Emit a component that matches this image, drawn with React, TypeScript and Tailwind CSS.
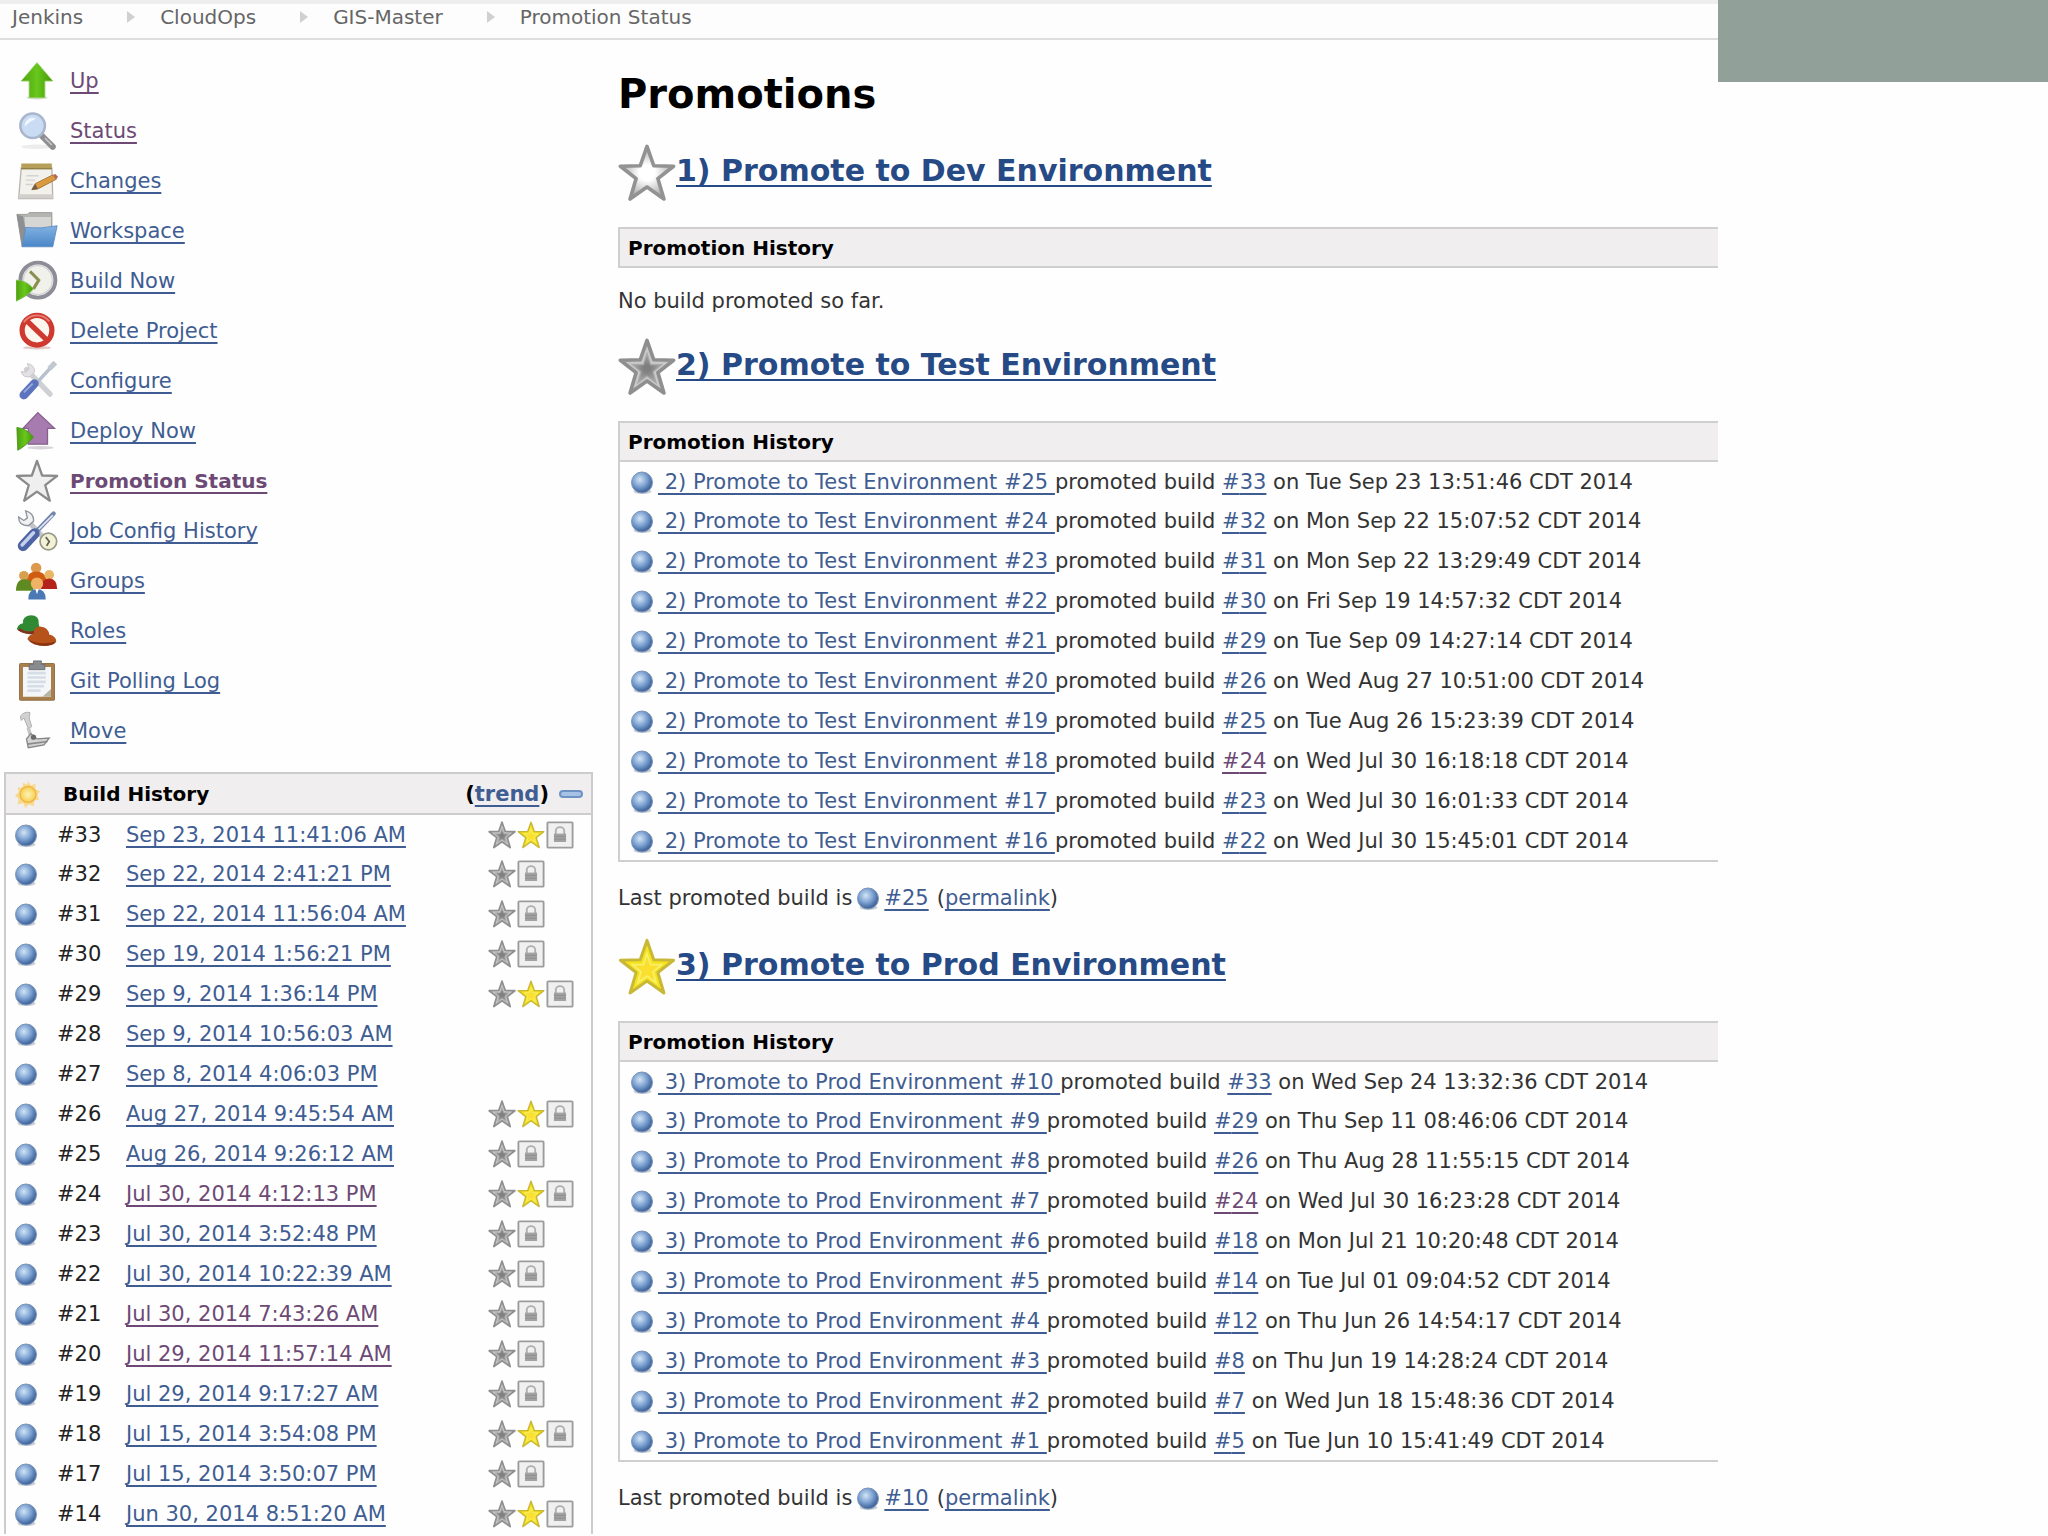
import React from "react";

const LINK = "text-[#3f5d92] underline decoration-2 underline-offset-4 [text-decoration-skip-ink:none]";
const VISITED = "text-[#6d4a75] underline decoration-2 underline-offset-4 [text-decoration-skip-ink:none]";

const STAR = "M24 2 L29.6 18 L46 18.4 L33 28.6 L38 45.500 L24 35.600 L10 45.500 L15 28.600 L2 18.400 L18.400 18 Z";
const INNER_STAR = "M24 13 L27 22 L36 22 L29 28 L31.500 37 L24 31.500 L16.500 37 L19 28 L12 22 L21 22 Z";

function Defs() {
  return (
    <svg className="absolute size-0" aria-hidden="true">
      <defs>
        <radialGradient id="ball" cx="0.4" cy="0.36" r="0.66">
          <stop offset="0" stopColor="#d3e4f5" />
          <stop offset="0.5" stopColor="#7fa4d3" />
          <stop offset="0.9" stopColor="#41679f" />
          <stop offset="1" stopColor="#55759f" />
        </radialGradient>
        <linearGradient id="green" x1="0" y1="0" x2="1" y2="0">
          <stop offset="0" stopColor="#4f9f10" />
          <stop offset="0.5" stopColor="#68c81c" />
          <stop offset="1" stopColor="#43960a" />
        </linearGradient>
        <linearGradient id="blue" x1="0" y1="0" x2="0" y2="1">
          <stop offset="0" stopColor="#82b2e2" />
          <stop offset="1" stopColor="#4a86c8" />
        </linearGradient>
        <radialGradient id="whiteStar">
          <stop offset="0.3" stopColor="#ffffff" />
          <stop offset="1" stopColor="#a8a8a8" />
        </radialGradient>
        <radialGradient id="silverCore">
          <stop offset="0.2" stopColor="#7f7f7f" />
          <stop offset="1" stopColor="#a6a6a6" />
        </radialGradient>
        <radialGradient id="sun">
          <stop offset="0" stopColor="#fdf3b8" />
          <stop offset="1" stopColor="#f6cf4e" />
        </radialGradient>
      </defs>
    </svg>
  );
}

function Ball() {
  return (
    <svg viewBox="0 0 24 24" className="size-6 shrink-0" role="img" aria-label="Success">
      <ellipse cx="12.500" cy="21.500" rx="9" ry="2.500" fill="#c9ced6" />
      <circle cx="12" cy="12.500" r="10.500" fill="url(#ball)" stroke="#7c93b5" strokeWidth="1" />
    </svg>
  );
}

type StarKind = "white" | "silver" | "gold" | "outline";

function Star({ kind, className }: { kind: StarKind; className: string }) {
  return (
    <svg viewBox="0 0 48 48" className={className} aria-hidden="true">
      {kind === "white" && <path d={STAR} fill="url(#whiteStar)" stroke="#929292" strokeWidth="3" strokeLinejoin="round" />}
      {kind === "outline" && <path d={STAR} fill="#efefef" stroke="#8a8a8a" strokeWidth="2.500" strokeLinejoin="round" />}
      {kind === "silver" && (
        <>
          <path d={STAR} fill="#c8c8c8" stroke="#8f8f8f" strokeWidth="3" strokeLinejoin="round" />
          <path d={INNER_STAR} fill="url(#silverCore)" stroke="#a8a8a8" strokeWidth="1" />
        </>
      )}
      {kind === "gold" && (
        <>
          <path d={STAR} fill="#f5e41c" stroke="#c9b838" strokeWidth="2.500" strokeLinejoin="round" />
          <path d={INNER_STAR} fill="#fbdf2e" stroke="#f8ef6a" strokeWidth="1.500" />
        </>
      )}
    </svg>
  );
}

function Lock() {
  return (
    <svg viewBox="0 0 30 30" className="size-7" role="img" aria-label="Keep this build">
      <rect x="1.500" y="1.500" width="27" height="27" rx="1" fill="#f0f0f0" stroke="#9c9c9c" strokeWidth="2" />
      <path d="M10.500 14 V10.500 a4.500 4 0 0 1 9 0 V14" fill="none" stroke="#b0b0b0" strokeWidth="2" />
      <rect x="8.500" y="13.500" width="13" height="9" fill="#a2a2a2" />
      <path d="M9 16.500h12M9 19.500h12" stroke="#8d8d8d" />
    </svg>
  );
}

const ICONS: Record<string, React.ReactNode> = {
  up: (
    <>
      <ellipse cx="24" cy="43" rx="12" ry="2" fill="#d5ddcf" />
      <path d="M24 3 L42 24 H33 V43 H15 V24 H6 Z" fill="url(#green)" stroke="#8fce5c" />
    </>
  ),
  status: (
    <>
      <ellipse cx="24" cy="42" rx="18" ry="2.500" fill="#ececec" />
      <path d="M29 29 L42 42" stroke="#8f8f92" strokeWidth="7" strokeLinecap="round" />
      <path d="M33 32 L41 40" stroke="#c4c4c8" strokeWidth="2" />
      <circle cx="19" cy="18" r="14" fill="#c9dcf4" stroke="#a9b6cc" strokeWidth="3" />
      <path d="M10 19 a9 9 0 0 1 13 -9 c-5 2 -9 5 -13 9Z" fill="#eff6ff" />
    </>
  ),
  changes: (
    <>
      <path d="M6 9 H41 L42 44 H3 Z" fill="#f3f1ec" stroke="#b7b3ac" strokeWidth="1.500" />
      <path d="M3 39 H42 V44 H3Z" fill="#d2d0cc" />
      <path d="M6 4 H41 V10 H6Z" fill="#b69f58" />
      <path d="M6 10 H41" stroke="#8f7c44" strokeWidth="1.500" />
      <path d="M12 18h14M11 23h11M11 28h8" stroke="#d3d3d3" strokeWidth="1.500" />
      <path d="M18 34 L22 27 L42 17 L46 22 L25 33 Z" fill="#dc9a3f" stroke="#a0713a" />
      <path d="M18 34 L22 27 L25 33Z" fill="#6f5c4a" />
      <path d="M42 17 L46 22 L48 19 L45 16Z" fill="#b5685a" />
    </>
  ),
  workspace: (
    <>
      <path d="M1 5 H13 L15 3 H41 V26 H9 L7 42 Z" fill="#b4b4b2" stroke="#92928f" />
      <path d="M10 8 H40 V22 H10Z" fill="#d6d6d4" />
      <path d="M1 5 L7 42 L11 22 L8 7Z" fill="#8d8f91" />
      <path d="M11 20 Q28 22 47 18 L42 42 H7 Z" fill="url(#blue)" stroke="#5a8cc4" />
    </>
  ),
  build: (
    <>
      <circle cx="25" cy="23" r="20" fill="#f1f1ec" stroke="#8d8d98" strokeWidth="4.500" />
      <circle cx="25" cy="23" r="16.500" fill="none" stroke="#d4d4d6" strokeWidth="1.500" />
      <path d="M16 13 L26 23 L20 33" fill="none" stroke="#8b8f4f" strokeWidth="3.500" />
      <path d="M0 23 Q12 23 20 33 Q12 42 0 47 Z" fill="url(#green)" stroke="#7cc04c" />
    </>
  ),
  delete: (
    <>
      <ellipse cx="24" cy="43" rx="16" ry="2" fill="#e3c9c6" />
      <circle cx="24" cy="23" r="17" fill="#fdf6ee" stroke="#cf3a30" strokeWidth="6" />
      <path d="M12 12 L36 35" stroke="#cf3a30" strokeWidth="6" />
      <path d="M9 14 A18 18 0 0 1 38 13" fill="none" stroke="#e98078" strokeWidth="2" />
    </>
  ),
  configure: (
    <>
      <path d="M12 11 L39 39" stroke="#cfd0d4" strokeWidth="6" strokeLinecap="round" />
      <path d="M6 13 q2 8 10 6 l5 -5 q1 -8 -8 -10 l2 6 -4 4Z" fill="#e3e1e4" stroke="#c6c2c6" />
      <path d="M43 5 L23 27" stroke="#b7c0cc" strokeWidth="4" strokeLinecap="round" />
      <path d="M45 3 L38 10" stroke="#c2c8d0" strokeWidth="6" />
      <path d="M21 27 L9 40" stroke="#5b74bd" strokeWidth="10" strokeLinecap="round" />
      <path d="M19 27 L9 37" stroke="#9cabdd" strokeWidth="2" />
    </>
  ),
  deploy: (
    <>
      <ellipse cx="28" cy="43" rx="15" ry="2" fill="#d9d4d9" />
      <path d="M25 3 L44 21 H36 V39 H14 V21 H8 Z" fill="#a87bb0" stroke="#85608d" strokeWidth="1.500" />
      <path d="M1 20 Q12 21 20 31 Q10 42 2 46 Z" fill="url(#green)" stroke="#4c9420" />
    </>
  ),
  history: (
    <>
      <path d="M13 12 L30 30" stroke="#c3c5cb" strokeWidth="6" />
      <path d="M3 8 q0 10 11 10 l6 -5 q1 -9 -9 -12 l2 8 -4 3Z" fill="#f1f1f1" stroke="#8f929b" strokeWidth="1.500" />
      <path d="M43 4 L23 25" stroke="#7486ad" strokeWidth="5" strokeLinecap="round" />
      <path d="M42 6 L26 22" stroke="#e2e8f4" strokeWidth="2" />
      <path d="M21 27 L8 41" stroke="#4d64a5" strokeWidth="12" strokeLinecap="round" />
      <path d="M20 26 L7 40" stroke="#c6d1ee" strokeWidth="4" strokeLinecap="round" />
      <circle cx="37" cy="36" r="9.500" fill="#f3f2d4" stroke="#9a9b8c" strokeWidth="2" />
      <path d="M34 31 L38 36 L35 41" fill="none" stroke="#5f6257" strokeWidth="2" />
    </>
  ),
  groups: (
    <>
      <circle cx="23" cy="9" r="6" fill="#dd9a4e" />
      <path d="M11 30 q0 -17 12 -17 q13 0 13 17Z" fill="#cf5c12" />
      <circle cx="9" cy="18" r="5.500" fill="#d7a04f" />
      <path d="M0 35 q0 -13 10 -13 q10 0 10 13Z" fill="#5f8a22" />
      <circle cx="38" cy="17" r="5.500" fill="#e8b765" />
      <path d="M28 33 q1 -12 10 -12 q9 0 9 12Z" fill="#b3231b" />
      <circle cx="24" cy="27" r="7" fill="#f0b264" />
      <path d="M14 45 q0 -12 10 -12 q10 0 10 12Z" fill="#4a79b5" />
      <path d="M22 33h4l-2 6Z" fill="#ffffff" />
    </>
  ),
  roles: (
    <>
      <path d="M1 22 q1 -6 7 -7 q-1 -8 9 -9 q10 0 9 10 l2 9 q-12 7 -27 -3Z" fill="#2f8a33" />
      <path d="M3 22 q9 6 20 3" fill="none" stroke="#85301f" strokeWidth="3" />
      <path d="M13 33 q2 -5 7 -6 q0 -9 9 -8 q8 1 9 9 q8 2 8 8 q-10 8 -25 3 Z" fill="#b5531a" />
      <path d="M13 33 q14 8 33 3 q-3 5 -12 5 q-16 0 -21 -8Z" fill="#8c3412" />
    </>
  ),
  clipboard: (
    <>
      <rect x="4" y="4" width="40" height="42" rx="1" fill="#a97f4b" stroke="#8a683f" />
      <rect x="8" y="8" width="32" height="34" fill="#f5f6f7" />
      <path d="M13 15h21M13 20h21M13 25h21M13 30h19M13 35h15" stroke="#d5dde7" strokeWidth="3" />
      <path d="M30 42 L40 33 V42Z" fill="#b9b4a8" />
      <path d="M15 11 V5 H20 V1 H29 V5 H33 V11Z" fill="#888b90" stroke="#6c6f73" />
    </>
  ),
  move: (
    <>
      <path d="M5 7 q5 -6 11 -4 l-1 6 3 10 -4 2 -5 -12 -3 3Z" fill="#d2d2d2" stroke="#a8a8a8" />
      <path d="M14 20 L17 31" stroke="#c4c4c4" strokeWidth="4" />
      <path d="M12 33 L17 27 L24 33 L38 32 L32 40 L14 43 Z" fill="#d4d4d4" stroke="#868686" strokeWidth="1.500" />
      <circle cx="20" cy="31" r="3" fill="#6b6b6b" />
      <path d="M13 39 L36 36" stroke="#8a8a8a" strokeWidth="2" />
    </>
  ),
};

function TaskIcon({ name }: { name: string }) {
  if (name === "star") return <Star kind="outline" className="size-11 shrink-0" />;
  return (
    <svg viewBox="0 0 48 48" className="size-[42px] shrink-0" aria-hidden="true">
      {ICONS[name]}
    </svg>
  );
}

const TASKS: { icon: string; label: string; visited?: boolean; bold?: boolean }[] = [
  { icon: "up", label: "Up", visited: true },
  { icon: "status", label: "Status", visited: true },
  { icon: "changes", label: "Changes" },
  { icon: "workspace", label: "Workspace" },
  { icon: "build", label: "Build Now" },
  { icon: "delete", label: "Delete Project" },
  { icon: "configure", label: "Configure" },
  { icon: "deploy", label: "Deploy Now" },
  { icon: "star", label: "Promotion Status", visited: true, bold: true },
  { icon: "history", label: "Job Config History" },
  { icon: "groups", label: "Groups" },
  { icon: "roles", label: "Roles" },
  { icon: "clipboard", label: "Git Polling Log" },
  { icon: "move", label: "Move" },
];

// badges: 0 = none, 1 = test promotion, 2 = test and prod promotions
const BUILDS: { id: number; date: string; badges: 0 | 1 | 2; visited?: boolean }[] = [
  { id: 33, date: "Sep 23, 2014 11:41:06 AM", badges: 2 },
  { id: 32, date: "Sep 22, 2014 2:41:21 PM", badges: 1 },
  { id: 31, date: "Sep 22, 2014 11:56:04 AM", badges: 1 },
  { id: 30, date: "Sep 19, 2014 1:56:21 PM", badges: 1 },
  { id: 29, date: "Sep 9, 2014 1:36:14 PM", badges: 2 },
  { id: 28, date: "Sep 9, 2014 10:56:03 AM", badges: 0 },
  { id: 27, date: "Sep 8, 2014 4:06:03 PM", badges: 0 },
  { id: 26, date: "Aug 27, 2014 9:45:54 AM", badges: 2 },
  { id: 25, date: "Aug 26, 2014 9:26:12 AM", badges: 1 },
  { id: 24, date: "Jul 30, 2014 4:12:13 PM", badges: 2, visited: true },
  { id: 23, date: "Jul 30, 2014 3:52:48 PM", badges: 1 },
  { id: 22, date: "Jul 30, 2014 10:22:39 AM", badges: 1 },
  { id: 21, date: "Jul 30, 2014 7:43:26 AM", badges: 1, visited: true },
  { id: 20, date: "Jul 29, 2014 11:57:14 AM", badges: 1, visited: true },
  { id: 19, date: "Jul 29, 2014 9:17:27 AM", badges: 1 },
  { id: 18, date: "Jul 15, 2014 3:54:08 PM", badges: 2 },
  { id: 17, date: "Jul 15, 2014 3:50:07 PM", badges: 1 },
  { id: 14, date: "Jun 30, 2014 8:51:20 AM", badges: 2 },
];

type Promotion = [run: number, build: number, when: string];

const TEST_RUNS: Promotion[] = [
  [25, 33, "Tue Sep 23 13:51:46 CDT 2014"],
  [24, 32, "Mon Sep 22 15:07:52 CDT 2014"],
  [23, 31, "Mon Sep 22 13:29:49 CDT 2014"],
  [22, 30, "Fri Sep 19 14:57:32 CDT 2014"],
  [21, 29, "Tue Sep 09 14:27:14 CDT 2014"],
  [20, 26, "Wed Aug 27 10:51:00 CDT 2014"],
  [19, 25, "Tue Aug 26 15:23:39 CDT 2014"],
  [18, 24, "Wed Jul 30 16:18:18 CDT 2014"],
  [17, 23, "Wed Jul 30 16:01:33 CDT 2014"],
  [16, 22, "Wed Jul 30 15:45:01 CDT 2014"],
];

const PROD_RUNS: Promotion[] = [
  [10, 33, "Wed Sep 24 13:32:36 CDT 2014"],
  [9, 29, "Thu Sep 11 08:46:06 CDT 2014"],
  [8, 26, "Thu Aug 28 11:55:15 CDT 2014"],
  [7, 24, "Wed Jul 30 16:23:28 CDT 2014"],
  [6, 18, "Mon Jul 21 10:20:48 CDT 2014"],
  [5, 14, "Tue Jul 01 09:04:52 CDT 2014"],
  [4, 12, "Thu Jun 26 14:54:17 CDT 2014"],
  [3, 8, "Thu Jun 19 14:28:24 CDT 2014"],
  [2, 7, "Wed Jun 18 15:48:36 CDT 2014"],
  [1, 5, "Tue Jun 10 15:41:49 CDT 2014"],
];

function Breadcrumbs() {
  const items = ["Jenkins", "CloudOps", "GIS-Master", "Promotion Status"];
  return (
    <nav aria-label="Breadcrumb" className="border-t-4 border-b-2 border-t-[#eeeeee] border-b-[#dedede] bg-[#fdfdfd]">
      <ol className="flex h-[34px] items-center pb-2 pl-3 text-[20px] leading-6 text-[#666666]">
        {items.map((item, i) => (
          <li key={item} className="flex items-center">
            {i > 0 && (
              <svg viewBox="0 0 8 12" className="mr-[25px] ml-11 h-3 w-2" aria-hidden="true">
                <path d="M0 0 L8 6 L0 12Z" fill="#d0d0d0" />
              </svg>
            )}
            <a href="#">{item}</a>
          </li>
        ))}
      </ol>
    </nav>
  );
}

function BuildHistory() {
  return (
    <table className="w-full border-2 border-b-0 border-[#cccccc]">
      <thead>
        <tr className="h-[41px] border-b-2 border-[#cccccc] bg-[#f0eeee] text-left text-[20px] text-black">
          <th className="w-12 pl-2">
            <svg viewBox="0 0 30 30" className="size-7" aria-hidden="true">
              <path
                d="M15 1l3 5 5-2v6l5 2-3 4 2 5-5 1-1 6-5-2-4 4-2-5-6 1 1-6-4-3 4-4-1-5 5 0 1-5 4 2z"
                fill="#f9d98c"
              />
              <circle cx="15" cy="15.500" r="8.500" fill="url(#sun)" stroke="#eeb64a" strokeWidth="1.500" />
            </svg>
          </th>
          <th colSpan={2} className="pl-[10px]">Build History</th>
          <th className="pr-2">
            <div className="flex items-center justify-end gap-[10px] text-[21px]">
              <span>
                (<a href="#" className={LINK}>trend</a>)
              </span>
              <button type="button" aria-label="Collapse build history" className="h-2 w-6 rounded-sm border-2 border-[#6f92c4] bg-[#a8c2e6]" />
            </div>
          </th>
        </tr>
      </thead>
      <tbody>
        {BUILDS.map((b) => (
          <tr key={b.id} className="h-10">
            <td className="pl-2"><Ball /></td>
            <td className="w-[73px] pl-1 text-[#222222]">#{b.id}</td>
            <td><a href="#" className={b.visited ? VISITED : LINK}>{b.date}</a></td>
            <td className="w-[170px] pl-[66px]">
              {b.badges > 0 && (
                <div className="flex items-center gap-px">
                  <Star kind="silver" className="size-7" />
                  {b.badges === 2 && <Star kind="gold" className="size-7" />}
                  <Lock />
                </div>
              )}
            </td>
          </tr>
        ))}
      </tbody>
    </table>
  );
}

function Process({ title, star, runs }: { title: string; star: StarKind; runs: Promotion[] }) {
  return (
    <section>
      <h2 className="flex h-[60px] items-center text-[30px] font-bold">
        <Star kind={star} className="size-[58px]" />
        <a href="#" className="pb-1 text-[#264a86] underline decoration-2 underline-offset-4 [text-decoration-skip-ink:none]">
          {title}
        </a>
      </h2>
      <table className="mt-6 w-full border-y-2 border-l-2 border-[#cfcfcf]">
        <thead>
          <tr className="h-[39px] bg-[#f0eeef] text-left text-[20px] text-black">
            <th className="pl-2">Promotion History</th>
          </tr>
        </thead>
        {runs.length > 0 && (
          <tbody className="border-t-2 border-[#cfcfcf]">
            {runs.map(([run, build, when]) => (
              <tr key={run} className="h-10">
                <td className="pl-[10px]">
                  <div className="flex items-center gap-1 whitespace-pre">
                    <Ball />
                    <p>
                      <a href="#" className={LINK}>{` ${title} #${run} `}</a>
                      promoted build{" "}
                      <a href="#" className={build === 24 ? VISITED : LINK}>#{build}</a>
                      {` on ${when}`}
                    </p>
                  </div>
                </td>
              </tr>
            ))}
          </tbody>
        )}
      </table>
      {runs.length > 0 ? (
        <p className="mt-[22px] mb-[25px] flex h-7 items-center">
          <span className="mr-1">Last promoted build is</span>
          <Ball />
          <a href="#" className={LINK + " ml-1"}>#{runs[0][0]}</a>
          <span className="ml-2">
            (<a href="#" className={LINK}>permalink</a>)
          </span>
        </p>
      ) : (
        <p className="mt-[19px] mb-[22px] h-7">No build promoted so far.</p>
      )}
    </section>
  );
}

export default function App() {
  return (
    <div className="relative flex min-h-screen bg-[#fefefe] font-['DejaVu_Sans',Verdana,sans-serif] text-[21px] leading-7 text-[#333333]">
      <Defs />
      <div className="flex min-w-0 flex-1 flex-col">
        <Breadcrumbs />
        <div className="flex flex-1">
          <aside className="w-[593px] shrink-0 pt-4 pl-1">
            <ul className="mb-4">
              {TASKS.map((t) => (
                <li key={t.label} className={t.bold ? "flex h-[50px] items-center text-[20px] font-bold" : "flex h-[50px] items-center"}>
                  <div className="flex w-[66px] justify-center">
                    <TaskIcon name={t.icon} />
                  </div>
                  <a href="#" className={t.visited ? VISITED : LINK}>{t.label}</a>
                </li>
              ))}
            </ul>
            <BuildHistory />
          </aside>
          <main className="min-w-0 flex-1 pt-[25px] pl-[25px]">
            <h1 className="mb-5 text-[40px] leading-[58px] font-bold text-black">Promotions</h1>
            <Process title="1) Promote to Dev Environment" star="white" runs={[]} />
            <Process title="2) Promote to Test Environment" star="silver" runs={TEST_RUNS} />
            <Process title="3) Promote to Prod Environment" star="gold" runs={PROD_RUNS} />
          </main>
        </div>
      </div>
      <div className="w-[330px] shrink-0">
        <div className="h-[82px] bg-[#91a099]" />
      </div>
    </div>
  );
}
